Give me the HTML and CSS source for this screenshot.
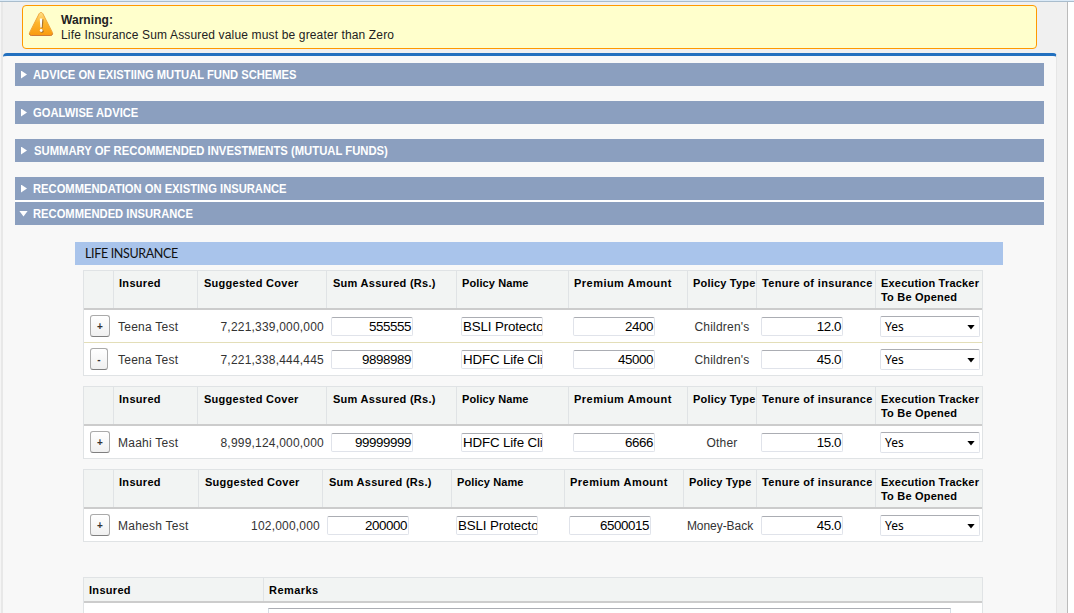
FILE: index.html
```
<!DOCTYPE html>
<html lang="en">
<head>
<meta charset="utf-8">
<title>Recommended Insurance</title>
<link rel="stylesheet" href="styles.css">
</head>
<body>
<div class="page">
  <div class="warning">
    <svg class="warning-icon" width="26" height="26" viewBox="0 0 26 26">
      <defs><linearGradient id="amber" x1="0" y1="0" x2="0" y2="1"><stop offset="0" stop-color="#ffe08a"/><stop offset=".45" stop-color="#fdb52b"/><stop offset="1" stop-color="#f99a10"/></linearGradient></defs>
      <path d="M13 1.500c.9 0 1.500.5 2 1.500l9.300 18.300c.8 1.700 0 3.200-1.800 3.200h-19c-1.800 0-2.600-1.500-1.800-3.200L11 3c.5-1 1.100-1.500 2-1.500z" fill="url(#amber)" stroke="#f0a73a"/>
      <path d="M1.500 22.500c.2 1.300.8 2 1.900 2h19.200c1.100 0 1.700-.7 1.900-2" fill="none" stroke="#cf7a3a" stroke-width="1"/>
      <path d="M12.700 8.200h2.800l-.8 9h-1.400z" fill="#a8732c"/><circle cx="14" cy="20.200" r="1.600" fill="#a8732c"/>
      <path d="M11.800 7.500h2.500l-.6 9h-1.300z" fill="#fff"/><circle cx="13.200" cy="19.500" r="1.400" fill="#fff"/>
    </svg>
    <div class="warning-text"><b class="warning-title">Warning:</b><span class="warning-message">Life Insurance Sum Assured value must be greater than Zero</span></div>
  </div>
  <div class="panel">
    <div class="bar"><i class="arrow"></i><span class="t-advice">ADVICE ON EXISTIING MUTUAL FUND SCHEMES</span></div>
    <div class="bar"><i class="arrow"></i><span class="t-goal">GOALWISE ADVICE</span></div>
    <div class="bar"><i class="arrow"></i><span class="t-summary">SUMMARY OF RECOMMENDED INVESTMENTS (MUTUAL FUNDS)</span></div>
    <div class="bar tight"><i class="arrow"></i><span class="t-existing">RECOMMENDATION ON EXISTING INSURANCE</span></div>
    <div class="bar open"><i class="arrow down"></i><span class="t-recommended">RECOMMENDED INSURANCE</span></div>
    <div class="section-title"><span>LIFE INSURANCE</span></div>

    <div class="table">
      <div class="row head"><div></div><div class="h-ins">Insured</div><div class="h-cover">Suggested Cover</div><div class="h-sum">Sum Assured (Rs.)</div><div class="h-name">Policy Name</div><div class="h-prem">Premium Amount</div><div class="h-type">Policy Type</div><div class="h-ten">Tenure of insurance</div><div class="h-exec">Execution Tracker<br>To Be Opened</div></div>
      <div class="row"><div><span class="btn">+</span></div><div class="who">Teena Test</div><div class="num">7,221,339,000,000</div><div><span class="field right">555555</span></div><div><span class="field">BSLI Protecto</span></div><div><span class="field right">2400</span></div><div class="type">Children's</div><div><span class="field right">12.0</span></div><div><span class="select">Yes<i></i></span></div></div>
      <div class="row"><div><span class="btn minus">-</span></div><div class="who">Teena Test</div><div class="num">7,221,338,444,445</div><div><span class="field right">9898989</span></div><div><span class="field">HDFC Life Cli</span></div><div><span class="field right">45000</span></div><div class="type">Children's</div><div><span class="field right">45.0</span></div><div><span class="select">Yes<i></i></span></div></div>
    </div>

    <div class="table">
      <div class="row head"><div></div><div class="h-ins">Insured</div><div class="h-cover">Suggested Cover</div><div class="h-sum">Sum Assured (Rs.)</div><div class="h-name">Policy Name</div><div class="h-prem">Premium Amount</div><div class="h-type">Policy Type</div><div class="h-ten">Tenure of insurance</div><div class="h-exec">Execution Tracker<br>To Be Opened</div></div>
      <div class="row"><div><span class="btn">+</span></div><div class="who">Maahi Test</div><div class="num">8,999,124,000,000</div><div><span class="field right">99999999</span></div><div><span class="field">HDFC Life Cli</span></div><div><span class="field right">6666</span></div><div class="type">Other</div><div><span class="field right">15.0</span></div><div><span class="select">Yes<i></i></span></div></div>
    </div>

    <div class="table shifted">
      <div class="row head"><div></div><div class="h-ins">Insured</div><div class="h-cover">Suggested Cover</div><div class="h-sum">Sum Assured (Rs.)</div><div class="h-name">Policy Name</div><div class="h-prem">Premium Amount</div><div class="h-type">Policy Type</div><div class="h-ten">Tenure of insurance</div><div class="h-exec">Execution Tracker<br>To Be Opened</div></div>
      <div class="row"><div><span class="btn">+</span></div><div class="who">Mahesh Test</div><div class="num">102,000,000</div><div><span class="field right">200000</span></div><div><span class="field">BSLI Protecto</span></div><div><span class="field right">6500015</span></div><div class="type long">Money-Back</div><div><span class="field right">45.0</span></div><div><span class="select">Yes<i></i></span></div></div>
    </div>

    <div class="table remarks">
      <div class="row head"><div class="h-ins">Insured</div><div class="h-rem">Remarks</div></div>
      <div class="row"><div></div><div><span class="remark-field"></span></div></div>
    </div>
  </div>
</div>
</body>
</html>
```
FILE: styles.css
```
* { box-sizing: border-box; }
body { margin: 0; height: 613px; overflow: hidden; background: #fff; font-family: "Liberation Sans", Arial, sans-serif; font-size: 12px; color: #333; border-top: 1px solid #dcebf8; }
.page { height: 612px; overflow: hidden; width: 1074px; border-top: 1px solid #a9bdcd; padding: 3px 0 0 3px; background: linear-gradient(90deg, #f5f5f5 1px, #e8e8e8 1px, #e8e8e8 3px, #f0f0f0 3px, #f0f0f0 1067px, #bbb 1067px, #bbb 1068px, #fff 1068px); }
.warning { display: flex; width: 1015px; height: 44px; margin-left: 19px; border: 1px solid #f90; border-radius: 4px; background: #ffc; padding: 5px 5px; }
.warning-icon { flex: none; }
.warning-text { display: flex; flex-direction: column; padding: 2px 0 0 7px; line-height: 15px; color: #222; white-space: nowrap; }
.warning-title, .warning-message { align-self: flex-start; }
.warning-title { letter-spacing: .05px; }
.warning-message { letter-spacing: .155px; }
.panel { margin-top: 4px; width: 1054px; height: 560px; border: 0 solid #e6e6e6; border-width: 3px 1px 0 0; border-top-color: #2270bf; border-radius: 4px 4px 0 0; background: #f8f8f8; padding: 7px 0 0 12px; }
.bar { display: flex; align-items: center; width: 1029px; height: 23px; margin-bottom: 15px; background: #8b9fbf; color: #fff; font-size: 12px; font-weight: bold; padding-left: 6px; white-space: nowrap; }
.bar span { transform: scaleX(.933); transform-origin: 0 50%; }
.bar.tight { margin-bottom: 0; box-shadow: 0 2px #fff; }
.bar.open { margin: 2px 0 17px; }
.bar .t-summary { transform: scaleX(.94); margin-left: 1px; }
.arrow { width: 12px; height: 8px; }
.arrow::before { content: ""; display: block; width: 6px; height: 8px; background: #fff; clip-path: polygon(0 0, 100% 50%, 0 100%); }
.arrow.down { height: 6px; margin-left: -2px; width: 14px; }
.arrow.down::before { width: 9px; height: 6px; clip-path: polygon(0 0, 100% 0, 50% 100%); }
.section-title { width: 928px; height: 23px; margin: 0 0 5px 60px; padding-left: 10px; background: #a9c4eb; color: #111; font: 12.5px/23px Lato, sans-serif; letter-spacing: -.35px; }
.table { width: 900px; margin: 0 0 10px 68px; border: 1px solid #e0e3e5; background: #fff; --cols: 29px 84px 129px 130px 112px 119px 69px 119px 107px; }
.shifted { --cols: 29px 85px 124px 129px 113px 119px 73px 119px 107px; margin-bottom: 35px; }
.remarks { --cols: 179px 719px; }
.row { display: grid; grid-template-columns: var(--cols); height: 32px; white-space: nowrap; }
.row > div { display: flex; align-items: center; padding-left: 5px; letter-spacing: .2px; }
.row > div:first-child { padding-left: 6px; }
.row + .row + .row { border-top: 1px solid #e3deb8; height: 33px; }
.row > .who { padding-top: 2px; letter-spacing: .25px; }
.row > .num { justify-content: flex-end; padding: 2px 2px 0 0; }
.row > .type { justify-content: center; padding: 2px 0 0 1px; }
.row > .long { letter-spacing: -.05px; }
.row.head { height: 39px; background: #f2f4f3; border-bottom: 2px solid #ccc; font-size: 11px; line-height: 14px; font-weight: bold; color: #000; }
.head > div { display: block; padding: 5px 0 0 5px; }
.head > div + div { border-left: 1px solid #e0e3e5; }
.head > .h-ins { letter-spacing: .3px; }
.head > .h-cover { padding-left: 6px; letter-spacing: .28px; }
.head > .h-sum { padding-left: 6px; letter-spacing: .28px; }
.head > .h-name { letter-spacing: .1px; }
.head > .h-prem { letter-spacing: .47px; }
.head > .h-ten { letter-spacing: .34px; }
.head > .h-rem { letter-spacing: .45px; }
.remarks .row.head { height: 25px; }
.remarks .row.head > div { padding-left: 5px; }
.btn { width: 20px; height: 22px; border: 1px solid #aaa; border-bottom-color: #7f7f7f; border-radius: 3px; background: linear-gradient(#fff, #f0f0f0); font: bold 10px/21px "Liberation Sans", Arial, sans-serif; text-align: center; color: #333; letter-spacing: 0; }
.minus { width: 18px; }
.field { width: 82px; height: 19px; border: 1px solid #e0e3ea; border-top-color: #abadb3; border-radius: 2px; background: #fff; font-size: 13.33px; line-height: 17px; color: #000; padding: 0 1px; overflow: hidden; letter-spacing: -.14px; margin-top: 1px; }
.field.right { text-align: right; letter-spacing: -.4px; }
.select { display: flex; align-items: center; justify-content: space-between; width: 100px; height: 21px; border: 1px solid #e0e3ea; border-top-color: #abadb3; border-radius: 2px; background: #fff; color: #000; font: 12px/19px "Noto Sans", sans-serif; padding: 0 4px; letter-spacing: 0; }
.select i { width: 8px; height: 5px; margin-top: 2px; background: #000; clip-path: polygon(0 0, 100% 0, 50% 100%); }
.remarks .row + .row { height: 60px; }
.remarks .row + .row > div { align-items: flex-start; padding-top: 5px; }
.remark-field { width: 683px; height: 50px; border: 1px solid #d5dde5; border-top-color: #abadb3; }
```
